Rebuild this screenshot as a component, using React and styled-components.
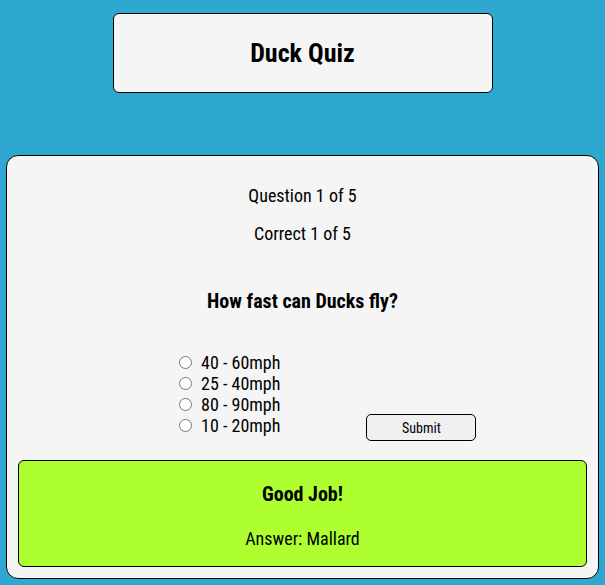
import React, { useState } from 'react'
import styled, { createGlobalStyle } from 'styled-components'

const GlobalStyle = createGlobalStyle`
  body {
    margin: 0;
    background: #2ea8d0;
    font-family: 'Roboto Condensed', Roboto, 'Liberation Sans', sans-serif;
    font-stretch: condensed;
    color: #000;
  }
`

const Page = styled.div`
  padding: 13px 6px 0;
`

const Header = styled.header`
  width: 378px;
  height: 78px;
  margin: 0 auto 62px;
  display: flex;
  align-items: center;
  justify-content: center;
  background: #f5f5f5;
  border: 1px solid #000;
  border-radius: 6px;
`

const Title = styled.h1`
  margin: 0;
  font-size: 26px;
  font-weight: 700;
`

const Card = styled.main`
  background: #f5f5f5;
  border: 1px solid #000;
  border-radius: 12px;
  padding: 29px 11px 11px;
  display: flex;
  flex-direction: column;
  align-items: center;
`

const Info = styled.p`
  margin: 0 0 17px;
  font-size: 18px;
  line-height: 21px;
`

const Question = styled.h2`
  margin: 28px 0 38px;
  font-size: 20px;
  line-height: 24px;
  font-weight: 700;
`

const Form = styled.form`
  align-self: flex-start;
  display: flex;
  align-items: flex-end;
  gap: 86px;
  margin-left: 161px;
  margin-bottom: 24px;
  padding-top: 1px;
`

const Options = styled.div`
  display: flex;
  flex-direction: column;
`

const Option = styled.label`
  display: flex;
  align-items: center;
  gap: 9px;
  font-size: 18px;
  line-height: 21px;

  input {
    margin: 0;
    width: 13px;
    height: 13px;
  }
`

const SubmitButton = styled.button`
  width: 110px;
  height: 27px;
  margin-bottom: -5px;
  font-family: inherit;
  font-size: 14px;
  background: #f0f0f0;
  border: 1px solid #000;
  border-radius: 5px;
`

const Result = styled.section`
  align-self: stretch;
  background: #adff2f;
  border: 1px solid #000;
  border-radius: 6px;
  padding: 21px 0 17px;
  display: flex;
  flex-direction: column;
  align-items: center;
`

const ResultTitle = styled.h3`
  margin: 0 0 22px;
  font-size: 20px;
  line-height: 24px;
  font-weight: 700;
`

const Answer = styled.p`
  margin: 0;
  font-size: 18px;
  line-height: 21px;
`

const options = ['40 - 60mph', '25 - 40mph', '80 - 90mph', '10 - 20mph']

export default function App() {
  const [choice, setChoice] = useState(null)
  return (
    <>
      <GlobalStyle />
      <Page>
        <Header>
          <Title>Duck Quiz</Title>
        </Header>
        <Card>
          <Info>Question 1 of 5</Info>
          <Info>Correct 1 of 5</Info>
          <Question>How fast can Ducks fly?</Question>
          <Form onSubmit={e => e.preventDefault()}>
            <Options>
              {options.map(o => (
                <Option key={o}>
                  <input
                    type="radio"
                    name="answer"
                    checked={choice === o}
                    onChange={() => setChoice(o)}
                  />
                  {o}
                </Option>
              ))}
            </Options>
            <SubmitButton type="submit">Submit</SubmitButton>
          </Form>
          <Result>
            <ResultTitle>Good Job!</ResultTitle>
            <Answer>Answer: Mallard</Answer>
          </Result>
        </Card>
      </Page>
    </>
  )
}
